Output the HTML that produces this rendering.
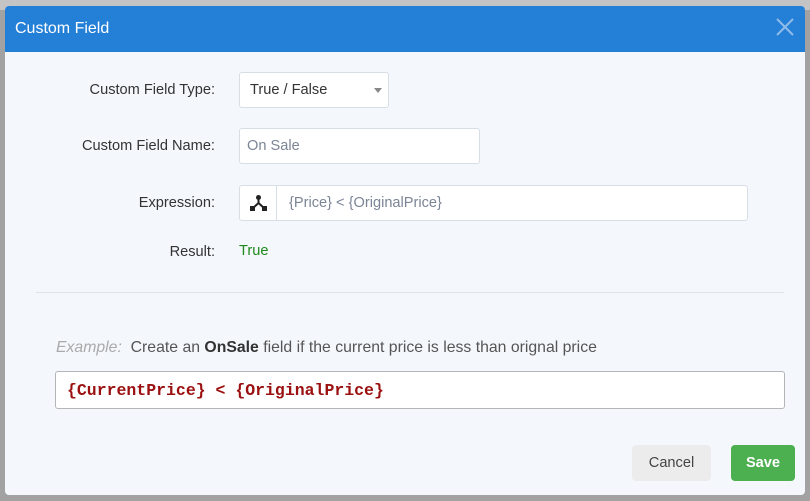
<!DOCTYPE html>
<html><head><style>
*{box-sizing:border-box;margin:0;padding:0}
body{width:810px;height:501px;background:#a2a2a2;font-family:"Liberation Sans",sans-serif;position:relative;overflow:hidden}
.bgtop{position:absolute;left:0;top:0;width:810px;height:10px;background:#c4c4c4}
.dlg{position:absolute;left:5px;top:6px;width:800px;height:489px;background:#f4f8fc;border-radius:4px;overflow:hidden}
.hd{height:46px;background:#247fd7;color:#fff;font-size:16px;line-height:46px;padding-left:10px}
.x{position:absolute;right:9px;top:10px}
.lbl{position:absolute;right:590px;font-size:14.6px;color:#333;text-align:right}
.inp{position:absolute;background:#fff;border:1px solid #d8dee6;border-radius:3px;font-size:14.6px}
.mono{font-family:"Liberation Mono",monospace}
.btn{position:absolute;top:439px;height:36px;border-radius:4px;font-size:14.6px;line-height:36px;text-align:center}
</style></head><body>
<div class="bgtop"></div>
<div class="dlg">
<div class="hd">Custom Field</div>
<svg class="x" width="22" height="22" viewBox="0 0 22 22"><path d="M3 3L19 19M19 3L3 19" stroke="#8fbbe8" stroke-width="2"/></svg>
<div class="lbl" style="top:76px">Custom Field Type:</div>
<div class="inp" style="left:234px;top:66px;width:150px;height:36px;line-height:35px;padding-left:10px;color:#333">True / False
<svg style="position:absolute;right:6px;top:15px" width="8" height="5"><path d="M0 0h8L4 5z" fill="#888"/></svg></div>
<div class="lbl" style="top:132px">Custom Field Name:</div>
<div class="inp" style="left:234px;top:122px;width:241px;height:36px;line-height:35px;padding-left:7px;color:#7b8595">On Sale</div>
<div class="lbl" style="top:189px">Expression:</div>
<div class="inp" style="left:234px;top:179px;width:509px;height:36px;line-height:35px;color:#7b8595">
<div style="position:absolute;left:0;top:0;width:37px;height:34px;border-right:1px solid #d8dee6">
<svg style="position:absolute;left:9px;top:8px" width="19" height="18" viewBox="0 0 19 18"><circle cx="9.5" cy="3.5" r="2.5" fill="#222"/><path d="M9.5 4v5M9.5 9L4 14M9.5 9L15 14" stroke="#222" stroke-width="2" fill="none"/><rect x="1" y="12" width="5" height="5" fill="#222"/><rect x="13" y="12" width="5" height="5" fill="#222"/></svg></div>
<span style="position:absolute;left:49px">{Price} &lt; {OriginalPrice}</span></div>
<div class="lbl" style="top:238px">Result:</div>
<div style="position:absolute;left:234px;top:237px;font-size:14.6px;color:#1e8a1e">True</div>
<div style="position:absolute;left:31px;top:286px;width:748px;height:1px;background:#dfe4ea"></div>
<div style="position:absolute;left:51px;top:333px;font-size:15.8px;color:#555"><i style="color:#aaa">Example:</i>&nbsp; Create an <b style="color:#333">OnSale</b> field if the current price is less than orignal price</div>
<div class="inp mono" style="left:50px;top:365px;width:730px;height:38px;line-height:37px;padding-left:11px;border-color:#b5b5b5;color:#9b1010;font-size:16.5px;font-weight:bold">{CurrentPrice} &lt; {OriginalPrice}</div>
<div class="btn" style="left:627px;width:79px;background:#ececec;color:#444">Cancel</div>
<div class="btn" style="left:726px;width:64px;background:#4caf50;color:#fff;font-weight:bold">Save</div>
</div>
</body></html>
